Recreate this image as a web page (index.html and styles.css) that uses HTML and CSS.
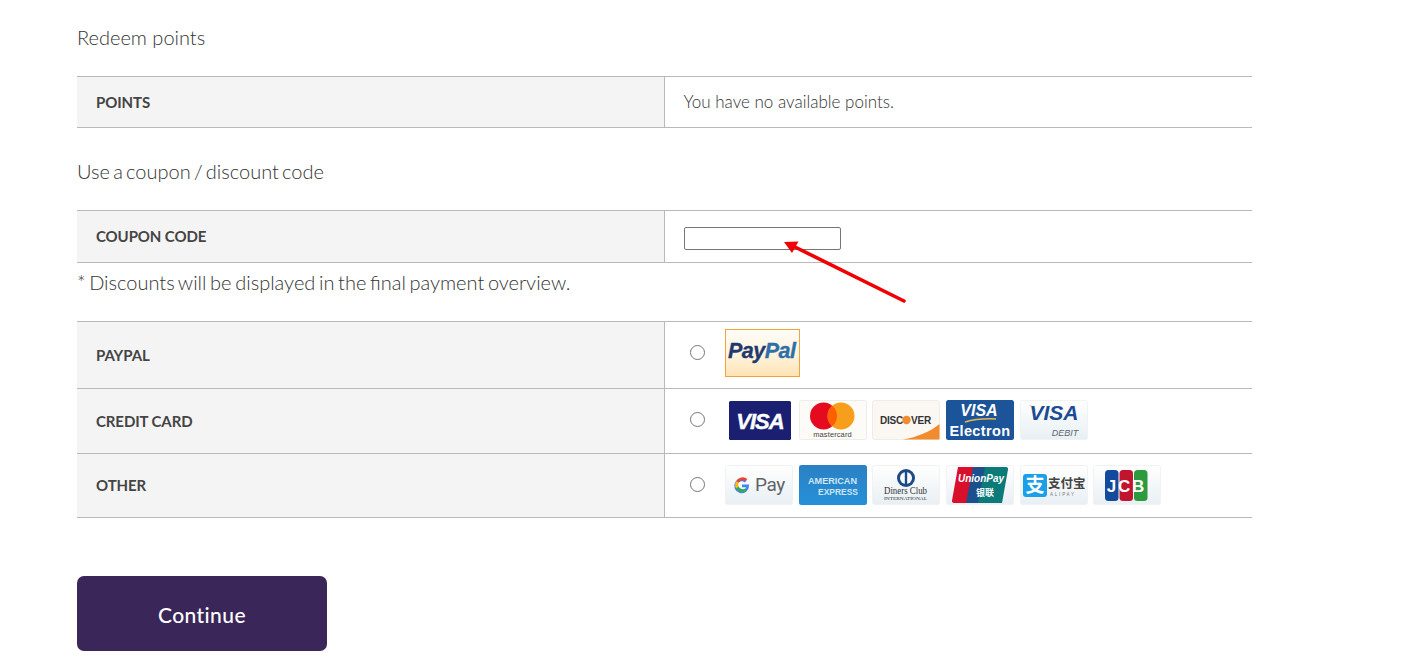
FILE: index.html
```html
<!DOCTYPE html>
<html lang="en">
<head>
<meta charset="utf-8">
<title>Redeem points</title>
<link rel="stylesheet" href="styles.css">
</head>
<body>
<main class="page">
  <p class="heading heading-first">Redeem points</p>
  <table class="info">
    <tr class="points-row"><th>POINTS</th><td>You have no available points.</td></tr>
  </table>

  <p class="heading heading-coupon">Use a coupon / discount code</p>
  <table class="info">
    <tr class="coupon-row"><th>COUPON CODE</th><td><input class="coupon" type="text" aria-label="Coupon code"></td></tr>
  </table>
  <p class="note">* Discounts will be displayed in the final payment overview.</p>

  <table class="info pay">
    <tr class="row-paypal">
      <th>PAYPAL</th>
      <td><div class="methods">
        <input class="radio" type="radio" name="pay" aria-label="PayPal">
        <svg class="paypal" viewBox="0 0 75 48">
          <defs><linearGradient id="ppg" x1="0" y1="0" x2="0" y2="1"><stop offset="0" stop-color="#fffdf8"/><stop offset=".55" stop-color="#fff3dc"/><stop offset="1" stop-color="#fde3b4"/></linearGradient></defs>
          <rect x=".5" y=".5" width="74" height="47" fill="url(#ppg)" stroke="#f3a33e"/>
          <text x="3" y="29" class="pp-text" fill="#1f3a6e" stroke="#1f3a6e" stroke-width=".35">Pay<tspan fill="#2f6fa8" stroke="#2f6fa8">Pal</tspan></text>
        </svg>
      </div></td>
    </tr>
    <tr class="row-card">
      <th>CREDIT CARD</th>
      <td><div class="methods">
        <input class="radio" type="radio" name="pay" aria-label="Credit card">
        <svg class="card" viewBox="0 0 68 40">
          <rect x="4" y="1" width="62" height="39" rx="1.500" fill="#1a1f71"/>
          <text x="35" y="29" text-anchor="middle" class="visa" fill="#fff" stroke="#fff" stroke-width=".4">VISA</text>
        </svg>
        <svg class="card" viewBox="0 0 68 40">
          <rect x=".5" y=".5" width="67" height="39" rx="2" fill="#fdfbf7" stroke="#f0ede8"/>
          <circle cx="24.500" cy="16" r="13.500" fill="#e50a1f"/>
          <circle cx="42" cy="16" r="13.500" fill="#f79e1b"/>
          <path d="M33.250 5.700a13.500 13.500 0 0 1 0 20.600a13.500 13.500 0 0 1 0-20.600z" fill="#ff5f00"/>
          <text x="33.500" y="36.500" text-anchor="middle" class="mc" fill="#444">mastercard</text>
        </svg>
        <svg class="card" viewBox="0 0 68 40">
          <rect x=".5" y=".5" width="67" height="39" rx="2" fill="#fbf8f4" stroke="#f0ede8"/>
          <path d="M67.500 24V39.500H31C45 37 58 32 67.500 24z" fill="#f28a2e"/>
          <text x="8" y="24" class="disc" fill="#333">DISC</text>
          <circle cx="34.500" cy="20" r="4.200" fill="#f28a2e"/>
          <text x="39" y="24" class="disc" fill="#333">VER</text>
        </svg>
        <svg class="card" viewBox="0 0 68 40">
          <rect width="68" height="40" rx="2.500" fill="#1c5499"/>
          <text x="33" y="16" text-anchor="middle" class="visa-sm" fill="#fff">VISA</text>
          <path d="M19 22c10-3 20-3.500 31-3" stroke="#e9b44c" stroke-width="1.500" fill="none"/>
          <text x="34" y="36" text-anchor="middle" class="electron" fill="#fff">Electron</text>
        </svg>
        <svg class="card" viewBox="0 0 68 40">
          <defs><linearGradient id="lg1" x1="0" y1="0" x2="0" y2="1"><stop offset="0" stop-color="#fff"/><stop offset="1" stop-color="#e8eff3"/></linearGradient></defs>
          <rect x=".5" y=".5" width="67" height="39" rx="2" fill="url(#lg1)" stroke="#f0f2f3"/>
          <path d="M8 5c4 0 7 2 8.500 6L14 7.500z" fill="#f2a93b"/>
          <text x="34" y="20" text-anchor="middle" class="visa-db" fill="#1d4b92">VISA</text>
          <text x="45" y="36" text-anchor="middle" class="debit" fill="#5a6670">DEBIT</text>
        </svg>
      </div></td>
    </tr>
    <tr class="row-other">
      <th>OTHER</th>
      <td><div class="methods">
        <input class="radio" type="radio" name="pay" aria-label="Other">
        <svg class="card" viewBox="0 0 68 40">
          <rect x=".5" y=".5" width="67" height="39" rx="2" fill="url(#lg1)" stroke="#f0f2f3"/>
          <g transform="translate(1.500 0)">
            <path d="M22.500 19.500h-7v2.800h4a4.600 4.600 0 1 1-1.300-4.800l2-2a7.400 7.400 0 1 0 2.300 5.400z" fill="#4285f4"/>
            <path d="M9.600 16.200a7.400 7.400 0 0 1 11.300-2.100l-2 2a4.600 4.600 0 0 0-6.800 1.500z" fill="#ea4335"/>
            <path d="M9.600 16.200l2.500 1.400a4.600 4.600 0 0 0 0 3.800l-2.500 2a7.400 7.400 0 0 1 0-7.200z" fill="#fbbc05"/>
            <path d="M9.600 23.400l2.500-2a4.600 4.600 0 0 0 6.100 2.300l2.300 1.900a7.400 7.400 0 0 1-10.900-2.200z" fill="#34a853"/>
          </g>
          <text x="30" y="26" class="gpay" fill="#5f6368">Pay</text>
        </svg>
        <svg class="card" viewBox="0 0 68 40">
          <defs><linearGradient id="ax" x1="0" y1="0" x2="0" y2="1"><stop offset="0" stop-color="#2c80c4"/><stop offset="1" stop-color="#2590d8"/></linearGradient></defs>
          <rect width="68" height="40" rx="2.500" fill="url(#ax)"/>
          <text x="9" y="19" class="amex" fill="#cfe6f5" textLength="49" lengthAdjust="spacingAndGlyphs">AMERICAN</text>
          <text x="19" y="30" class="amex" fill="#cfe6f5" textLength="40" lengthAdjust="spacingAndGlyphs">EXPRESS</text>
        </svg>
        <svg class="card" viewBox="0 0 68 40">
          <rect x=".5" y=".5" width="67" height="39" rx="2" fill="url(#lg1)" stroke="#f0f2f3"/>
          <circle cx="34" cy="13" r="9" fill="#1c4a86"/>
          <circle cx="34" cy="13" r="6" fill="#fff"/>
          <rect x="32.800" y="7" width="2.400" height="12" fill="#1c4a86"/>
          <text x="12" y="29" class="diners" fill="#333" textLength="43" lengthAdjust="spacingAndGlyphs">Diners Club</text>
          <text x="12" y="35" class="diners-sm" fill="#333" textLength="43" lengthAdjust="spacingAndGlyphs">INTERNATIONAL</text>
        </svg>
        <svg class="card" viewBox="0 0 68 40">
          <rect x=".5" y=".5" width="67" height="39" rx="2" fill="url(#lg1)" stroke="#f0f2f3"/>
          <path d="M12 2h16L21 38H8a2 2 0 0 1-2-2.500z" fill="#d9102c"/>
          <path d="M27 2h13l-7 36H20z" fill="#1c4f8c"/>
          <path d="M39 2h21a2 2 0 0 1 2 2.500L56 38H32z" fill="#0b7a78"/>
          <text x="35" y="17" text-anchor="middle" class="union" fill="#fff">UnionPay</text>
          <text x="39" y="31" text-anchor="middle" class="union-cn" fill="#fff">银联</text>
        </svg>
        <svg class="card" viewBox="0 0 68 40">
          <rect x=".5" y=".5" width="67" height="39" rx="2" fill="url(#lg1)" stroke="#f0f2f3"/>
          <rect x="3" y="9" width="24" height="23" rx="3" fill="#1a9fe8"/>
          <text x="15" y="27" text-anchor="middle" class="ali-mark" fill="#fff">支</text>
          <text x="28" y="23" class="ali-cn" fill="#444">支付宝</text>
          <text x="30" y="31" class="ali-en" fill="#777">ALIPAY</text>
        </svg>
        <svg class="card" viewBox="0 0 68 40">
          <rect x=".5" y=".5" width="67" height="39" rx="2" fill="url(#lg1)" stroke="#f0f2f3"/>
          <rect x="12" y="5" width="13.500" height="31" rx="3.500" fill="#144a9c"/>
          <rect x="26.500" y="5" width="13.500" height="31" rx="3.500" fill="#c0142f"/>
          <rect x="41" y="5" width="13.500" height="31" rx="3.500" fill="#2c9a3f"/>
          <text x="33.500" y="26.500" text-anchor="middle" class="jcb" fill="#fff">JCB</text>
        </svg>
      </div></td>
    </tr>
  </table>

  <button class="continue" type="button">Continue</button>
</main>

<svg class="arrow" viewBox="0 0 130 70" aria-hidden="true">
  <path d="M124 63 L13 8" stroke="#f00000" stroke-width="3.600" stroke-linecap="round" fill="none"/>
  <path d="M4 4 L18.500 3.500 L12 15 Z" fill="#f00000"/>
</svg>
</body>
</html>
```

FILE: styles.css
```css
* { box-sizing: border-box; }

html, body { margin: 0; padding: 0; }

body {
  position: relative;
  height: 672px;
  overflow: hidden;
  background: #fff;
  color: #444;
  font-family: Lato, "Liberation Sans", sans-serif;
}

.page {
  width: 1175px;
  margin-left: 77px;
}

.heading, .note {
  margin: 0;
  font-size: 20px;
  line-height: 24px;
  font-weight: 300;
  word-spacing: -1.800px;
  color: #333;
}

.heading-first { padding-top: 25px; margin-bottom: 27px; word-spacing: 0; }
.heading-coupon { margin-top: 31px; margin-bottom: 27px; word-spacing: -2.200px; }

.note { margin-top: 7px; margin-bottom: 27px; }

.info {
  width: 100%;
  table-layout: fixed;
  border-collapse: collapse;
}

.info th, .info td {
  border-top: 1px solid #b9b9b9;
  border-bottom: 1px solid #b9b9b9;
  padding: 0 0 0 19px;
  height: 52px;
  font-size: 17px;
  text-align: left;
  vertical-align: middle;
}

.info th {
  width: 587px;
  background: #f4f4f4;
  border-right: 1px solid #b9b9b9;
  font-size: 15px;
  font-weight: 700;
  letter-spacing: -.1px;
  color: #444;
}

.info td {
  font-weight: 300;
  color: #333;
}

.points-row th, .points-row td { height: 51px; }
.points-row td { padding-bottom: 2px; }
.coupon-row th { padding-bottom: 2px; }

.coupon {
  display: block;
  width: 157px;
  height: 23px;
  margin-top: 4px;
  padding: 1px 2px;
  border: 1px solid #767676;
  border-radius: 2px;
  background: #fff;
}

.row-paypal th, .row-paypal td { height: 67px; }
.row-card th, .row-card td { height: 65px; }
.row-other th, .row-other td { height: 64px; }

.row-other th { padding-bottom: 1px; }

.methods {
  display: flex;
  align-items: center;
  gap: 5.700px;
}

.radio {
  flex: none;
  width: 15px;
  height: 15px;
  margin: 0 14.800px 2px 6px;
}

.row-card .radio { margin-bottom: 4px; }
.row-paypal .radio { margin-bottom: 6px; }

.card {
  display: block;
  flex: none;
  width: 68px;
  height: 40px;
}

.row-card .card { margin-bottom: 2px; }
.row-other .card { margin-bottom: 1px; }

.paypal {
  display: block;
  flex: none;
  width: 75px;
  height: 48px;
  margin-bottom: 4px;
}

.continue {
  display: block;
  width: 250px;
  height: 75px;
  margin-top: 58px;
  padding: 2px 0 0;
  border: 0;
  border-radius: 7px;
  background: #3b2659;
  color: #fff;
  font-family: Lato, "Liberation Sans", sans-serif;
  font-size: 21px;
  font-weight: 500;
  letter-spacing: .4px;
}

.arrow {
  position: absolute;
  left: 780px;
  top: 238px;
  width: 130px;
  height: 70px;
}

.pp-text { font: italic 700 21.500px "Liberation Sans", sans-serif; letter-spacing: -.5px; }
.visa { font: italic 700 22px "Liberation Sans", sans-serif; letter-spacing: -1px; }
.mc { font: 400 7.500px "Liberation Sans", sans-serif; letter-spacing: .1px; }
.disc { font: 700 10px "Liberation Sans", sans-serif; letter-spacing: -.2px; }
.visa-sm { font: italic 700 16px "Liberation Sans", sans-serif; }
.electron { font: 700 14.500px "Liberation Sans", sans-serif; letter-spacing: .4px; }
.visa-db { font: italic 700 21px "Liberation Sans", sans-serif; }
.debit { font: italic 400 9px "Liberation Sans", sans-serif; }
.gpay { font: 400 19px "Roboto", sans-serif; letter-spacing: -.4px; }
.amex { font: 700 9.500px "Liberation Sans", sans-serif; }
.diners { font: 400 10.500px "Liberation Serif", serif; }
.diners-sm { font: 400 4.500px "Liberation Serif", serif; }
.union { font: italic 700 10px "Liberation Sans", sans-serif; }
.union-cn { font: 700 9px "Noto Sans CJK SC", sans-serif; }
.ali-mark { font: 700 19px "Noto Sans CJK SC", sans-serif; }
.ali-cn { font: 700 12.500px "Noto Sans CJK SC", sans-serif; }
.ali-en { font: 400 4.500px "Liberation Sans", sans-serif; letter-spacing: 1.800px; }
.jcb { font: 800 17px "Liberation Sans", sans-serif; letter-spacing: 1.800px; }
```
